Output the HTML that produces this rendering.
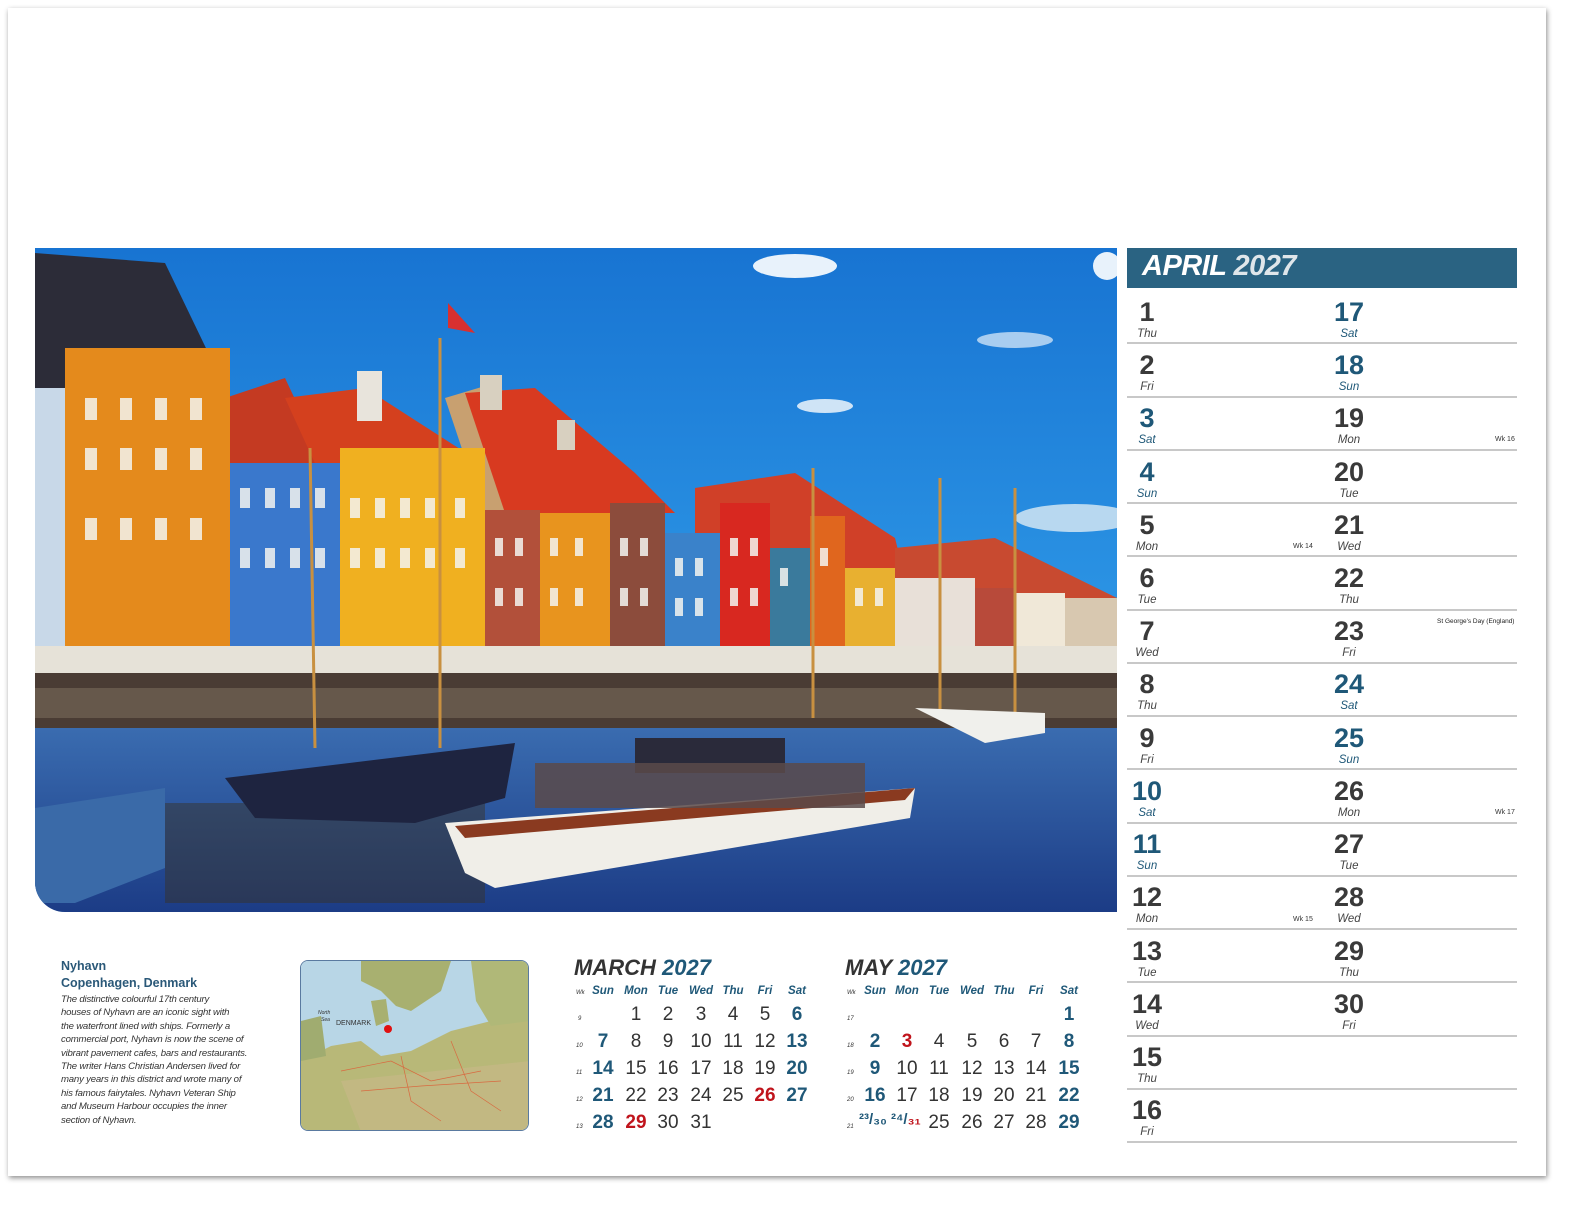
<!DOCTYPE html>
<html><head><meta charset="utf-8"><style>
*{margin:0;padding:0;box-sizing:border-box}
body{width:1593px;height:1212px;background:#fff;position:relative;overflow:hidden;font-family:"Liberation Sans","DejaVu Sans",sans-serif}
.card{position:absolute;left:8px;top:8px;width:1538px;height:1168px;background:#fff;box-shadow:1px 2px 5px rgba(0,0,0,.45)}
.photo{position:absolute;left:35px;top:248px;width:1082px;height:664px;border-bottom-left-radius:30px;overflow:hidden}
.hdr{position:absolute;left:1127px;top:248px;width:390px;height:40px;background:#2a6382}
.hdr span{position:absolute;left:15px;top:2px;font:italic bold 29px "Liberation Sans",sans-serif;color:#fff;letter-spacing:-.5px}
.hdr b{color:#dfe6ea}
.d{position:absolute;width:40px;text-align:center}
.d .n{font-weight:bold;font-size:27px;line-height:28px;color:#3a3a3a}
.d .w{font-style:italic;font-size:11.5px;line-height:13px;color:#444;margin-top:2px}
.d.b .n,.d.b .w{color:#1f5878}
.ln{position:absolute;height:2px;background:#c8c8c8}
.wk{position:absolute;font-size:7px;color:#333}
.note{position:absolute;font-size:6.5px;color:#222}
.mt{position:absolute;font:italic bold 22px "Liberation Sans",sans-serif;color:#333}
.mt b{color:#1f5878}
.c{position:absolute;width:34px;text-align:center;font-size:19px;color:#333;line-height:20px}
.c.b{color:#1f5878;font-weight:bold}
.c.r{color:#c0141c;font-weight:bold}
.h{position:absolute;width:34px;text-align:center;font-style:italic;font-weight:bold;font-size:11.5px;color:#1f5878}
.k{position:absolute;font-size:6px;font-style:italic;color:#333}
.txt{position:absolute;left:61px;top:958px;width:220px;color:#333}
.txt h3{font-size:12.5px;color:#2a5878;line-height:17px;font-weight:bold}
.txt p{font-style:italic;font-size:9.6px;line-height:13.4px;color:#333;margin-top:1px;white-space:nowrap;letter-spacing:-.2px}
.map{position:absolute;left:300px;top:960px;width:229px;height:171px;border:1.5px solid #5a7aa0;border-radius:8px;overflow:hidden}
</style></head><body>
<div class="card"></div>

<div class="photo">
<svg width="1082" height="664" viewBox="0 0 1082 664">
<defs>
<linearGradient id="sky" x1="0" y1="0" x2="0" y2="1"><stop offset="0" stop-color="#1874d2"/><stop offset=".6" stop-color="#2d97e6"/><stop offset="1" stop-color="#8cc8f0"/></linearGradient>
<linearGradient id="wat" x1="0" y1="0" x2="0" y2="1"><stop offset="0" stop-color="#3a6cb0"/><stop offset="1" stop-color="#1c3c86"/></linearGradient>
</defs>
<rect width="1082" height="664" fill="url(#sky)"/>
<ellipse cx="760" cy="18" rx="42" ry="12" fill="#e8f2fb"/>
<ellipse cx="1072" cy="18" rx="14" ry="14" fill="#e8f2fb"/>
<ellipse cx="790" cy="158" rx="28" ry="7" fill="#cfe4f6"/>
<ellipse cx="980" cy="92" rx="38" ry="8" fill="#a8cdf0"/>
<ellipse cx="1040" cy="270" rx="60" ry="14" fill="#b8d8f0"/>
<polygon points="0,5 130,15 195,150 0,150" fill="#2c2c38"/>
<polygon points="190,150 250,130 290,215 195,215" fill="#c43a22"/>
<polygon points="250,150 330,140 470,230 505,270 305,270" fill="#d4401e"/>
<polygon points="410,150 460,135 560,230 600,260 450,270" fill="#c8a070"/>
<polygon points="430,145 500,140 600,225 640,265 470,265" fill="#d83a20"/>
<polygon points="660,240 760,225 860,290 870,330 660,330" fill="#d04028"/>
<polygon points="860,300 960,290 1082,350 1082,380 860,380" fill="#c84a30"/>
<rect x="322" y="123" width="25" height="50" fill="#e8e4dc"/>
<rect x="445" y="127" width="22" height="35" fill="#d8d0c0"/>
<rect x="522" y="172" width="18" height="30" fill="#d8d0c0"/>
<rect x="0" y="140" width="30" height="270" fill="#c8d8e8"/>
<rect x="30" y="100" width="165" height="305" fill="#e48a1c"/>
<rect x="195" y="215" width="110" height="190" fill="#3a78cc"/>
<rect x="305" y="200" width="145" height="205" fill="#f0b020"/>
<rect x="450" y="262" width="55" height="140" fill="#b2503a"/>
<rect x="505" y="265" width="70" height="140" fill="#e8941e"/>
<rect x="575" y="255" width="55" height="150" fill="#8c4c3c"/>
<rect x="630" y="285" width="55" height="120" fill="#3a82ca"/>
<rect x="685" y="255" width="50" height="150" fill="#d82820"/>
<rect x="735" y="300" width="40" height="105" fill="#3a7a9c"/>
<rect x="775" y="268" width="35" height="137" fill="#e0661e"/>
<rect x="810" y="320" width="50" height="85" fill="#e8b030"/>
<rect x="860" y="330" width="80" height="80" fill="#e8e0d8"/>
<rect x="940" y="340" width="40" height="70" fill="#b84a3a"/>
<rect x="980" y="345" width="50" height="70" fill="#f0e8d8"/>
<rect x="1030" y="350" width="52" height="70" fill="#d8c8b0"/>
<g fill="#f4f4f0" opacity=".85">
<rect x="50" y="150" width="12" height="22"/><rect x="85" y="150" width="12" height="22"/><rect x="120" y="150" width="12" height="22"/><rect x="155" y="150" width="12" height="22"/>
<rect x="50" y="200" width="12" height="22"/><rect x="85" y="200" width="12" height="22"/><rect x="120" y="200" width="12" height="22"/><rect x="155" y="200" width="12" height="22"/>
<rect x="50" y="270" width="12" height="22"/><rect x="85" y="270" width="12" height="22"/><rect x="120" y="270" width="12" height="22"/><rect x="155" y="270" width="12" height="22"/>
<rect x="205" y="240" width="10" height="20"/><rect x="230" y="240" width="10" height="20"/><rect x="255" y="240" width="10" height="20"/><rect x="280" y="240" width="10" height="20"/>
<rect x="205" y="300" width="10" height="20"/><rect x="230" y="300" width="10" height="20"/><rect x="255" y="300" width="10" height="20"/><rect x="280" y="300" width="10" height="20"/>
<rect x="315" y="250" width="10" height="20"/><rect x="340" y="250" width="10" height="20"/><rect x="365" y="250" width="10" height="20"/><rect x="390" y="250" width="10" height="20"/><rect x="420" y="250" width="10" height="20"/>
<rect x="315" y="300" width="10" height="20"/><rect x="340" y="300" width="10" height="20"/><rect x="365" y="300" width="10" height="20"/><rect x="390" y="300" width="10" height="20"/><rect x="420" y="300" width="10" height="20"/>
<rect x="460" y="290" width="8" height="18"/><rect x="480" y="290" width="8" height="18"/><rect x="515" y="290" width="8" height="18"/><rect x="540" y="290" width="8" height="18"/><rect x="585" y="290" width="8" height="18"/><rect x="605" y="290" width="8" height="18"/><rect x="640" y="310" width="8" height="18"/><rect x="660" y="310" width="8" height="18"/><rect x="695" y="290" width="8" height="18"/><rect x="715" y="290" width="8" height="18"/><rect x="745" y="320" width="8" height="18"/><rect x="785" y="300" width="8" height="18"/><rect x="820" y="340" width="8" height="18"/><rect x="840" y="340" width="8" height="18"/>
<rect x="460" y="340" width="8" height="18"/><rect x="480" y="340" width="8" height="18"/><rect x="515" y="340" width="8" height="18"/><rect x="540" y="340" width="8" height="18"/><rect x="585" y="340" width="8" height="18"/><rect x="605" y="340" width="8" height="18"/><rect x="640" y="350" width="8" height="18"/><rect x="660" y="350" width="8" height="18"/><rect x="695" y="340" width="8" height="18"/><rect x="715" y="340" width="8" height="18"/>
</g>
<rect x="0" y="398" width="1082" height="36" fill="#e6e2d8"/>
<rect x="0" y="425" width="1082" height="75" fill="#4a3c34"/>
<rect x="0" y="440" width="1082" height="30" fill="#7a6a5c" opacity=".6"/>
<rect x="0" y="480" width="1082" height="184" fill="url(#wat)"/>
<rect x="130" y="555" width="320" height="100" fill="#3a3020" opacity=".45"/>
<g stroke="#c89040" stroke-width="3"><line x1="405" y1="90" x2="405" y2="500"/><line x1="275" y1="200" x2="280" y2="500"/><line x1="905" y1="230" x2="905" y2="470"/><line x1="980" y1="240" x2="980" y2="470"/><line x1="778" y1="220" x2="778" y2="470"/></g>
<polygon points="413,55 440,85 413,80" fill="#d83030"/>
<polygon points="190,530 480,495 470,550 380,575 220,570" fill="#1e2440"/>
<polygon points="0,560 130,540 130,620 40,655 0,655" fill="#3a6aa8"/>
<rect x="600" y="490" width="150" height="35" fill="#2a2a3a"/>
<polygon points="880,460 1010,465 1010,485 950,495" fill="#f0f0ec"/>
<polygon points="410,575 880,540 875,570 460,640 430,625" fill="#f0eee8"/>
<polygon points="420,578 880,540 870,552 430,590" fill="#8a3a20"/>
<rect x="500" y="515" width="330" height="45" fill="#5a4a4a" opacity=".85"/>
</svg>
</div>

<div class="hdr"><span>APRIL <b>2027</b></span></div>

<div class="d" style="left:1127px;top:298px"><div class="n">1</div><div class="w">Thu</div></div>
<div class="d" style="left:1127px;top:351px"><div class="n">2</div><div class="w">Fri</div></div>
<div class="d b" style="left:1127px;top:404px"><div class="n">3</div><div class="w">Sat</div></div>
<div class="d b" style="left:1127px;top:458px"><div class="n">4</div><div class="w">Sun</div></div>
<div class="d" style="left:1127px;top:511px"><div class="n">5</div><div class="w">Mon</div></div>
<div class="d" style="left:1127px;top:564px"><div class="n">6</div><div class="w">Tue</div></div>
<div class="d" style="left:1127px;top:617px"><div class="n">7</div><div class="w">Wed</div></div>
<div class="d" style="left:1127px;top:670px"><div class="n">8</div><div class="w">Thu</div></div>
<div class="d" style="left:1127px;top:724px"><div class="n">9</div><div class="w">Fri</div></div>
<div class="d b" style="left:1127px;top:777px"><div class="n">10</div><div class="w">Sat</div></div>
<div class="d b" style="left:1127px;top:830px"><div class="n">11</div><div class="w">Sun</div></div>
<div class="d" style="left:1127px;top:883px"><div class="n">12</div><div class="w">Mon</div></div>
<div class="d" style="left:1127px;top:937px"><div class="n">13</div><div class="w">Tue</div></div>
<div class="d" style="left:1127px;top:990px"><div class="n">14</div><div class="w">Wed</div></div>
<div class="d" style="left:1127px;top:1043px"><div class="n">15</div><div class="w">Thu</div></div>
<div class="d" style="left:1127px;top:1096px"><div class="n">16</div><div class="w">Fri</div></div>
<div class="d b" style="left:1329px;top:298px"><div class="n">17</div><div class="w">Sat</div></div>
<div class="d b" style="left:1329px;top:351px"><div class="n">18</div><div class="w">Sun</div></div>
<div class="d" style="left:1329px;top:404px"><div class="n">19</div><div class="w">Mon</div></div>
<div class="d" style="left:1329px;top:458px"><div class="n">20</div><div class="w">Tue</div></div>
<div class="d" style="left:1329px;top:511px"><div class="n">21</div><div class="w">Wed</div></div>
<div class="d" style="left:1329px;top:564px"><div class="n">22</div><div class="w">Thu</div></div>
<div class="d" style="left:1329px;top:617px"><div class="n">23</div><div class="w">Fri</div></div>
<div class="d b" style="left:1329px;top:670px"><div class="n">24</div><div class="w">Sat</div></div>
<div class="d b" style="left:1329px;top:724px"><div class="n">25</div><div class="w">Sun</div></div>
<div class="d" style="left:1329px;top:777px"><div class="n">26</div><div class="w">Mon</div></div>
<div class="d" style="left:1329px;top:830px"><div class="n">27</div><div class="w">Tue</div></div>
<div class="d" style="left:1329px;top:883px"><div class="n">28</div><div class="w">Wed</div></div>
<div class="d" style="left:1329px;top:937px"><div class="n">29</div><div class="w">Thu</div></div>
<div class="d" style="left:1329px;top:990px"><div class="n">30</div><div class="w">Fri</div></div>

<div class="ln" style="left:1127px;top:342px;width:216px"></div><div class="ln" style="left:1329px;top:342px;width:188px"></div>
<div class="ln" style="left:1127px;top:396px;width:216px"></div><div class="ln" style="left:1329px;top:396px;width:188px"></div>
<div class="ln" style="left:1127px;top:449px;width:216px"></div><div class="ln" style="left:1329px;top:449px;width:188px"></div>
<div class="ln" style="left:1127px;top:502px;width:216px"></div><div class="ln" style="left:1329px;top:502px;width:188px"></div>
<div class="ln" style="left:1127px;top:555px;width:216px"></div><div class="ln" style="left:1329px;top:555px;width:188px"></div>
<div class="ln" style="left:1127px;top:609px;width:216px"></div><div class="ln" style="left:1329px;top:609px;width:188px"></div>
<div class="ln" style="left:1127px;top:662px;width:216px"></div><div class="ln" style="left:1329px;top:662px;width:188px"></div>
<div class="ln" style="left:1127px;top:715px;width:216px"></div><div class="ln" style="left:1329px;top:715px;width:188px"></div>
<div class="ln" style="left:1127px;top:768px;width:216px"></div><div class="ln" style="left:1329px;top:768px;width:188px"></div>
<div class="ln" style="left:1127px;top:822px;width:216px"></div><div class="ln" style="left:1329px;top:822px;width:188px"></div>
<div class="ln" style="left:1127px;top:875px;width:216px"></div><div class="ln" style="left:1329px;top:875px;width:188px"></div>
<div class="ln" style="left:1127px;top:928px;width:216px"></div><div class="ln" style="left:1329px;top:928px;width:188px"></div>
<div class="ln" style="left:1127px;top:981px;width:216px"></div><div class="ln" style="left:1329px;top:981px;width:188px"></div>
<div class="ln" style="left:1127px;top:1035px;width:216px"></div><div class="ln" style="left:1329px;top:1035px;width:188px"></div>
<div class="ln" style="left:1127px;top:1088px;width:216px"></div><div class="ln" style="left:1329px;top:1088px;width:188px"></div>
<div class="ln" style="left:1127px;top:1141px;width:216px"></div><div class="ln" style="left:1329px;top:1141px;width:188px"></div>

<div class="wk" style="left:1293px;top:543px">Wk 14</div>
<div class="wk" style="left:1293px;top:916px">Wk 15</div>
<div class="wk" style="left:1495px;top:436px">Wk 16</div>
<div class="wk" style="left:1495px;top:809px">Wk 17</div>
<div class="note" style="left:1437px;top:618px">St George's Day (England)</div>

<div class="txt"><h3>Nyhavn<br>Copenhagen, Denmark</h3>
<p>The distinctive colourful 17th century<br>houses of Nyhavn are an iconic sight with<br>the waterfront lined with ships. Formerly a<br>commercial port, Nyhavn is now the scene of<br>vibrant pavement cafes, bars and restaurants.<br>The writer Hans Christian Andersen lived for<br>many years in this district and wrote many of<br>his famous fairytales. Nyhavn Veteran Ship<br>and Museum Harbour occupies the inner<br>section of Nyhavn.</p></div>

<div class="map"><svg width="229" height="171" viewBox="0 0 229 171">
<rect width="229" height="171" fill="#b8d6e6"/>
<path d="M0,100 L30,85 L60,80 L80,95 L110,90 L150,70 L190,60 L229,55 L229,171 L0,171Z" fill="#b8b878"/>
<path d="M60,0 L150,0 L140,30 L110,50 L95,45 L80,30 L60,20Z" fill="#a8b070"/>
<path d="M170,0 L229,0 L229,60 L190,65 L175,40Z" fill="#b0b878"/>
<path d="M70,40 L85,38 L88,60 L75,65Z" fill="#a8b070"/>
<path d="M0,60 L20,55 L25,95 L0,100Z" fill="#a0ac70"/>
<path d="M40,120 L229,100 L229,171 L60,171Z" fill="#c8b888" opacity=".6"/>
<g stroke="#d86a40" stroke-width=".7" fill="none"><path d="M40,110 L90,100 L130,120 L180,110"/><path d="M100,95 L110,140 L140,160"/><path d="M150,80 L170,130 L200,150"/><path d="M60,130 L120,125 L200,120"/></g>
<circle cx="87" cy="68" r="4" fill="#e01010"/>
<text x="17" y="53" font-size="5" font-style="italic" fill="#333">North</text>
<text x="20" y="60" font-size="5" font-style="italic" fill="#333">Sea</text>
<text x="35" y="64" font-size="7" fill="#333">DENMARK</text>
</svg></div>

<div class="mt" style="left:574px;top:955px">MARCH <b>2027</b></div>
<div class="k" style="left:576px;top:990px">Wk</div>
<div class="h" style="left:586px;top:985px">Sun</div><div class="h" style="left:619px;top:985px">Mon</div><div class="h" style="left:651px;top:985px">Tue</div><div class="h" style="left:684px;top:985px">Wed</div><div class="h" style="left:716px;top:985px">Thu</div><div class="h" style="left:748px;top:985px">Fri</div><div class="h" style="left:780px;top:985px">Sat</div>
<div class="k" style="left:578px;top:1016px">9</div><div class="k" style="left:576px;top:1043px">10</div><div class="k" style="left:576px;top:1070px">11</div><div class="k" style="left:576px;top:1097px">12</div><div class="k" style="left:576px;top:1124px">13</div>
<div class="c" style="left:619px;top:1005px">1</div><div class="c" style="left:651px;top:1005px">2</div><div class="c" style="left:684px;top:1005px">3</div><div class="c" style="left:716px;top:1005px">4</div><div class="c" style="left:748px;top:1005px">5</div><div class="c b" style="left:780px;top:1005px">6</div>
<div class="c b" style="left:586px;top:1032px">7</div><div class="c" style="left:619px;top:1032px">8</div><div class="c" style="left:651px;top:1032px">9</div><div class="c" style="left:684px;top:1032px">10</div><div class="c" style="left:716px;top:1032px">11</div><div class="c" style="left:748px;top:1032px">12</div><div class="c b" style="left:780px;top:1032px">13</div>
<div class="c b" style="left:586px;top:1059px">14</div><div class="c" style="left:619px;top:1059px">15</div><div class="c" style="left:651px;top:1059px">16</div><div class="c" style="left:684px;top:1059px">17</div><div class="c" style="left:716px;top:1059px">18</div><div class="c" style="left:748px;top:1059px">19</div><div class="c b" style="left:780px;top:1059px">20</div>
<div class="c b" style="left:586px;top:1086px">21</div><div class="c" style="left:619px;top:1086px">22</div><div class="c" style="left:651px;top:1086px">23</div><div class="c" style="left:684px;top:1086px">24</div><div class="c" style="left:716px;top:1086px">25</div><div class="c r" style="left:748px;top:1086px">26</div><div class="c b" style="left:780px;top:1086px">27</div>
<div class="c b" style="left:586px;top:1113px">28</div><div class="c r" style="left:619px;top:1113px">29</div><div class="c" style="left:651px;top:1113px">30</div><div class="c" style="left:684px;top:1113px">31</div>

<div class="mt" style="left:845px;top:955px">MAY <b>2027</b></div>
<div class="k" style="left:847px;top:990px">Wk</div>
<div class="h" style="left:858px;top:985px">Sun</div><div class="h" style="left:890px;top:985px">Mon</div><div class="h" style="left:922px;top:985px">Tue</div><div class="h" style="left:955px;top:985px">Wed</div><div class="h" style="left:987px;top:985px">Thu</div><div class="h" style="left:1019px;top:985px">Fri</div><div class="h" style="left:1052px;top:985px">Sat</div>
<div class="k" style="left:847px;top:1016px">17</div><div class="k" style="left:847px;top:1043px">18</div><div class="k" style="left:847px;top:1070px">19</div><div class="k" style="left:847px;top:1097px">20</div><div class="k" style="left:847px;top:1124px">21</div>
<div class="c b" style="left:1052px;top:1005px">1</div>
<div class="c b" style="left:858px;top:1032px">2</div><div class="c r" style="left:890px;top:1032px">3</div><div class="c" style="left:922px;top:1032px">4</div><div class="c" style="left:955px;top:1032px">5</div><div class="c" style="left:987px;top:1032px">6</div><div class="c" style="left:1019px;top:1032px">7</div><div class="c b" style="left:1052px;top:1032px">8</div>
<div class="c b" style="left:858px;top:1059px">9</div><div class="c" style="left:890px;top:1059px">10</div><div class="c" style="left:922px;top:1059px">11</div><div class="c" style="left:955px;top:1059px">12</div><div class="c" style="left:987px;top:1059px">13</div><div class="c" style="left:1019px;top:1059px">14</div><div class="c b" style="left:1052px;top:1059px">15</div>
<div class="c b" style="left:858px;top:1086px">16</div><div class="c" style="left:890px;top:1086px">17</div><div class="c" style="left:922px;top:1086px">18</div><div class="c" style="left:955px;top:1086px">19</div><div class="c" style="left:987px;top:1086px">20</div><div class="c" style="left:1019px;top:1086px">21</div><div class="c b" style="left:1052px;top:1086px">22</div>
<div style="position:absolute;left:859px;top:1111px;font-size:15px;color:#1f5878;font-weight:bold">²³/₃₀</div>
<div style="position:absolute;left:891px;top:1111px;font-size:15px;color:#1f5878;font-weight:bold"><span>²⁴</span>/<span style="color:#c0141c">₃₁</span></div>
<div class="c" style="left:922px;top:1113px">25</div><div class="c" style="left:955px;top:1113px">26</div><div class="c" style="left:987px;top:1113px">27</div><div class="c" style="left:1019px;top:1113px">28</div><div class="c b" style="left:1052px;top:1113px">29</div>
</body></html>
